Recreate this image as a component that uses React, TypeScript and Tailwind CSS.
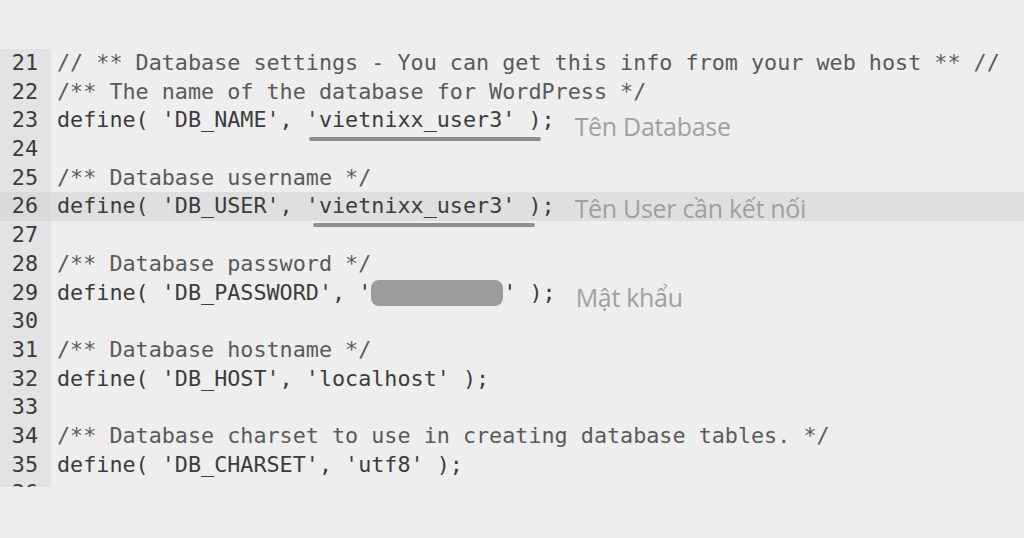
import React from 'react';

type Line = {
  n: number;
  node?: React.ReactNode;
  active?: boolean;
};

const mono = { fontFamily: '"DejaVu Sans Mono", "Liberation Mono", monospace' };

const Note: React.FC<{ children: React.ReactNode; pt: string }> = ({ children, pt }) => (
  <span
    className={`ml-[20px] ${pt} text-[25px] text-[#a0a0a0] tracking-[-0.3px]`}
    style={{ fontFamily: '"Open Sans", "Liberation Sans", sans-serif' }}
  >
    {children}
  </span>
);

// gạch chân xám dưới giá trị
const Marked: React.FC<{ children: React.ReactNode; left: string; right: string }> = ({ children, left, right }) => (
  <span className="relative">
    {children}
    <span className={`absolute ${left} ${right} top-[33px] h-[4px] rounded-full bg-[#8e8e8e]`} />
  </span>
);

const Comment: React.FC<{ children: React.ReactNode }> = ({ children }) => (
  <span className="text-[#5a5a5a]">{children}</span>
);

const lines: Line[] = [
  { n: 21, node: <Comment>// ** Database settings - You can get this info from your web host ** //</Comment> },
  { n: 22, node: <Comment>/** The name of the database for WordPress */</Comment> },
  {
    n: 23,
    node: (
      <>
        define( 'DB_NAME', <Marked left="left-[3px]" right="right-[-26px]">'vietnixx_user3'</Marked> );
        <Note pt="pt-[12px]">Tên Database</Note>
      </>
    ),
  },
  { n: 24 },
  { n: 25, node: <Comment>/** Database username */</Comment> },
  {
    n: 26,
    active: true,
    node: (
      <>
        define( 'DB_USER', <Marked left="left-[7px]" right="right-[-20px]">'vietnixx_user3'</Marked> );
        <Note pt="pt-[4px]">Tên User cần kết nối</Note>
      </>
    ),
  },
  { n: 27 },
  { n: 28, node: <Comment>/** Database password */</Comment> },
  {
    n: 29,
    node: (
      <>
        define( 'DB_PASSWORD', '
        <span className="inline-block align-middle w-[132px] h-[26px] rounded-[8px] bg-[#9c9c9c]" />
        ' );
        <Note pt="pt-[10px]">Mật khẩu</Note>
      </>
    ),
  },
  { n: 30 },
  { n: 31, node: <Comment>/** Database hostname */</Comment> },
  { n: 32, node: <>define( 'DB_HOST', 'localhost' );</> },
  { n: 33 },
  { n: 34, node: <Comment>/** Database charset to use in creating database tables. */</Comment> },
  { n: 35, node: <>define( 'DB_CHARSET', 'utf8' );</> },
  { n: 36 },
];

export default function App() {
  return (
    <div className="w-[1024px] h-[538px] bg-[#eeeeee] pt-[49px] overflow-hidden">
      <div className="h-[438px] overflow-hidden text-[21.75px] text-[#3c3c3c]" style={mono}>
        {lines.map((l) => (
          <div key={l.n} className={`flex items-center h-[28.7px] ${l.active ? 'bg-[#dfdfdf]' : ''}`}>
            <div
              className={`w-[51px] h-full flex items-center justify-end pr-[13px] text-[#3a3a3a] ${
                l.active ? 'bg-[#dadada]' : 'bg-[#e3e3e3]'
              }`}
            >
              {l.n}
            </div>
            <div className="pl-[6px] whitespace-pre flex items-center">{l.node}</div>
          </div>
        ))}
      </div>
    </div>
  );
}
